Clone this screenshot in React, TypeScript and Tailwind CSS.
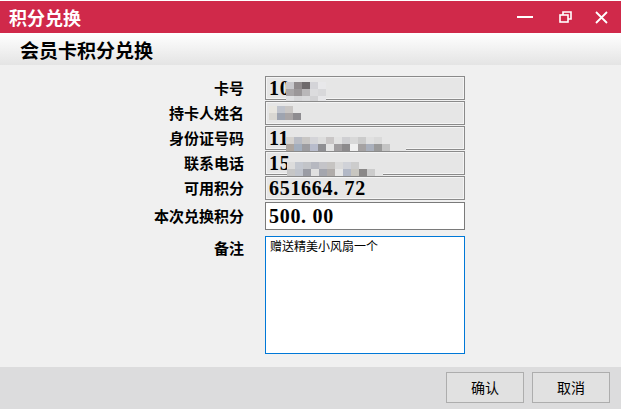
import React from "react";

const cjk = { fontFamily: '"Noto Sans CJK SC", "Liberation Sans", sans-serif' };
const num = { fontFamily: '"Liberation Serif", "Noto Sans CJK SC", serif' };

// pixelated blur blocks standing in for masked data
function Mosaic({ cells }: { cells: string[][] }) {
  return (
    <span className="inline-flex flex-col">
      {cells.map((row, i) => (
        <span key={i} className="flex">
          {row.map((c, j) => (
            <span key={j} className="w-[8px] h-[7px]" style={{ background: c }} />
          ))}
        </span>
      ))}
    </span>
  );
}

const labels = ["卡号", "持卡人姓名", "身份证号码", "联系电话", "可用积分"];

function ReadField({ children }: { children?: React.ReactNode }) {
  return (
    <div className="w-[200px] h-[24px] border border-[#8a8a8a] bg-[#e6e6e6] shadow-[inset_0_0_0_1px_#f4f4f4] flex items-center pl-[3px]">
      {children}
    </div>
  );
}

function Num({ children }: { children: React.ReactNode }) {
  return (
    <span className="text-[20px] font-bold text-black tracking-[0.7px] leading-none" style={num}>
      {children}
    </span>
  );
}

export default function App() {
  return (
    <div className="w-[628px] h-[409px] bg-white overflow-hidden">
      <div className="w-[621px] h-[408px] mt-[1px] flex flex-col bg-[#f0f0f0]">
        {/* title bar */}
        <div className="h-[32px] bg-[#d0294a] flex items-center justify-between pl-[9px] shrink-0">
          <span className="text-white font-bold text-[18px] leading-none" style={cjk}>积分兑换</span>
          <div className="flex items-center h-full">
            <div className="w-[40px] h-full flex items-center justify-center">
              <div className="w-[16px] h-[2px] bg-white" />
            </div>
            <div className="w-[40px] h-full flex items-center justify-center">
              <svg width="13" height="12" viewBox="0 0 13 12" fill="none" stroke="white" strokeWidth="1.6">
                <rect x="1" y="4" width="8" height="7" />
                <path d="M4 4V1h8v7H9" />
              </svg>
            </div>
            <div className="w-[36px] h-full flex items-center justify-center pr-[4px]">
              <svg width="13" height="13" viewBox="0 0 13 13" stroke="white" strokeWidth="1.8">
                <path d="M1 1l11 11M12 1L1 12" />
              </svg>
            </div>
          </div>
        </div>

        {/* header */}
        <div className="h-[32px] shrink-0 bg-gradient-to-b from-white to-[#e4e4e4] flex items-center pl-[20px]">
          <span className="text-[19px] font-bold text-black leading-none" style={cjk}>会员卡积分兑换</span>
        </div>

        {/* form */}
        <div className="flex-1 pt-[11px]">
          <div className="grid grid-cols-[244px_200px] gap-x-[21px]">
            {labels.map((l, i) => (
              <React.Fragment key={l}>
                <div className="h-[25px] flex items-center justify-end text-[15px] font-bold text-black pb-[1px]" style={cjk}>
                  {l}
                </div>
                <div className="h-[25px]">
                  <ReadField>
                    {i === 0 && (
                      <>
                        <Num>10</Num>
                        <span className="-ml-[4px] -mt-[2px]">
                          <Mosaic cells={[["#c8c8cc", "#8f8a8c", "#6e6a6c", "#d4d4d8", "#e8e8ea"], ["#a9a6a8", "#9b9799", "#b9b7b9", "#dcdcde", "#d8d8da"], ["#e0e0e2", "#d6d6d8", "#dadadc", "#d2d2d4", "#e6e6e8"]]} />
                        </span>
                      </>
                    )}
                    {i === 1 && (
                      <Mosaic cells={[["#e8e6e0", "#bfc3cc", "#c9c6c4", "#e6e6e6"], ["#d9d7d2", "#9ea4b0", "#a9a5a6", "#8e8c90"]]} />
                    )}
                    {i === 2 && (
                      <>
                        <Num>11</Num>
                        <span className="-ml-[3px]">
                          <Mosaic cells={[["#d6d3cf", "#b9bcc4", "#c8c6c4", "#d4d4d8", "#dddddd", "#c9c6c6", "#e2e2e2", "#cfcfd2", "#d8d8d8", "#cbcbcb", "#e0e0e0", "#dadada", "#e6e6e6", "#e6e6e6", "#e6e6e6"], ["#aea69f", "#a3aebd", "#9c9ca0", "#b8bccc", "#8f8f93", "#e4e4e4", "#a09d9f", "#8c8a8c", "#f0f0f0", "#a5a2a2", "#aab0bc", "#9a9a9a", "#c4c4c4", "#e6e6e6", "#e6e6e6"]]} />
                        </span>
                      </>
                    )}
                    {i === 3 && (
                      <>
                        <Num>15</Num>
                        <span className="-ml-[3px]">
                          <Mosaic cells={[["#dcdcdc", "#c4c8d0", "#c2c4c8", "#b6b8c0", "#c4c4c8", "#c6c4c2", "#dadada", "#d0d2d8", "#cccccc", "#e6e6e6", "#e6e6e6", "#e6e6e6"], ["#c6c6c6", "#c0c4cc", "#9a9ca4", "#e0e0e0", "#a4a6ae", "#b0acaa", "#e6e6e6", "#b2b8c6", "#c8c6c0", "#8a8888", "#cccccc", "#e6e6e6"]]} />
                        </span>
                      </>
                    )}
                    {i === 4 && <Num>651664.&nbsp;72</Num>}
                  </ReadField>
                </div>
              </React.Fragment>
            ))}

            <div className="h-[28px] mt-[1px] flex items-center justify-end text-[15px] font-bold text-black" style={cjk}>
              本次兑换积分
            </div>
            <div className="h-[28px] mt-[1px] border border-[#7a7a7a] bg-white flex items-center pl-[3px]">
              <Num>500.&nbsp;00</Num>
            </div>

            <div className="mt-[6px] pt-[1px] flex justify-end text-[15px] font-bold text-black" style={cjk}>
              备注
            </div>
            <div className="mt-[6px] h-[118px] border border-[#0078d7] bg-white px-[4px] text-[12px] text-black leading-[18px]" style={cjk}>
              赠送精美小风扇一个
            </div>
          </div>
        </div>

        {/* footer */}
        <div className="h-[42px] shrink-0 bg-[#dcdcdd] flex items-center justify-end gap-[8px] pr-[11px] pb-[2px]">
          <button className="w-[78px] h-[31px] bg-[#e1e1e1] border border-[#adadad] text-[14px] text-black" style={cjk}>确认</button>
          <button className="w-[78px] h-[31px] bg-[#e1e1e1] border border-[#adadad] text-[14px] text-black" style={cjk}>取消</button>
        </div>
      </div>
    </div>
  );
}
